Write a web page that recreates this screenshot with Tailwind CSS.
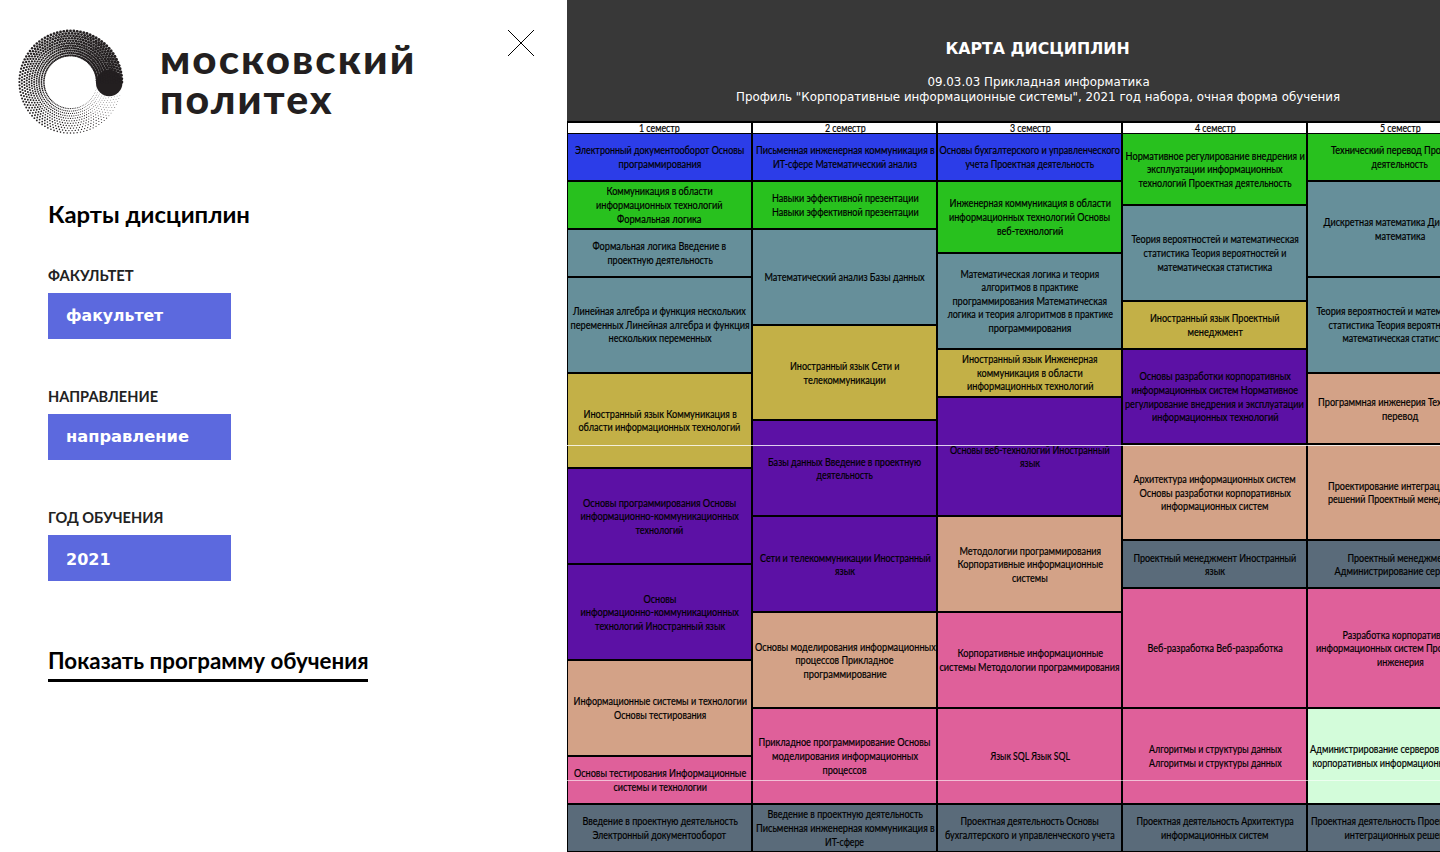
<!DOCTYPE html>
<html lang="ru">
<head>
<meta charset="utf-8">
<title>Карты дисциплин</title>
<script src="https://cdn.jsdelivr.net/npm/@tailwindcss/browser@4"></script>
</head>
<body class="h-[852px] w-[1440px] overflow-hidden bg-white font-['Lato','Open_Sans',sans-serif]">
<div class="flex h-[852px] w-[1440px] overflow-hidden">
  <aside class="h-full w-[567px] shrink-0">
    <header class="flex h-[140px] items-start pl-[16px]">
      <svg id="logo" class="mt-[27px] h-[110px] w-[110px] shrink-0" viewBox="16 27 110 110" fill="#231f20"></svg>
      <div class="ml-[34px] mt-[39px] w-[260px] text-[40px] font-black leading-[40px] tracking-[2px] text-[#231f20]">
        <div class="h-[40px]"><span class="inline-block origin-left whitespace-nowrap" data-w="256">московский</span></div>
        <div class="h-[40px]"><span class="inline-block origin-left whitespace-nowrap" data-w="174">политех</span></div>
      </div>
      <button class="ml-[87px] mt-[29px]" aria-label="Закрыть">
        <svg class="block h-[28px] w-[28px]" viewBox="0 0 28 28" stroke="#000" stroke-width="1"><path d="M1 1 27 27M27 1 1 27"/></svg>
      </button>
    </header>
    <div class="pl-12">
      <h1 class="mt-[59px] h-[30px] text-[23px] font-bold leading-[30px] text-black"><span class="inline-block origin-left whitespace-nowrap" data-w="202">Карты дисциплин</span></h1>
      <div class="mt-[35px] h-[121px]">
        <div class="h-[29px] text-[16px] font-bold leading-[22px] text-[#222]"><span class="inline-block origin-left whitespace-nowrap" data-w="86">ФАКУЛЬТЕТ</span></div>
        <div class="h-[46px] w-[183px] bg-[#5c69de] pl-[18px] font-['DejaVu_Sans'] text-[16px] font-bold leading-[45px] text-white"><span class="inline-block origin-left whitespace-nowrap" data-w="97">факультет</span></div>
      </div>
      <div class="h-[121px]">
        <div class="h-[29px] text-[16px] font-bold leading-[22px] text-[#222]"><span class="inline-block origin-left whitespace-nowrap" data-w="110">НАПРАВЛЕНИЕ</span></div>
        <div class="h-[46px] w-[183px] bg-[#5c69de] pl-[18px] font-['DejaVu_Sans'] text-[16px] font-bold leading-[45px] text-white"><span class="inline-block origin-left whitespace-nowrap" data-w="123">направление</span></div>
      </div>
      <div class="h-[121px]">
        <div class="h-[29px] text-[16px] font-bold leading-[22px] text-[#222]"><span class="inline-block origin-left whitespace-nowrap" data-w="115">ГОД ОБУЧЕНИЯ</span></div>
        <div class="h-[46px] w-[183px] bg-[#5c69de] pl-[18px] font-['DejaVu_Sans'] text-[16px] font-bold leading-[49px] text-white"><span class="inline-block origin-left whitespace-nowrap" data-w="45">2021</span></div>
      </div>
      <a class="mt-[19px] block h-[36px] w-[320px] border-b-[3px] border-black text-[22px] font-bold leading-[29px] text-black"><span class="inline-block origin-left whitespace-nowrap" data-w="321">Показать программу обучения</span></a>
    </div>
  </aside>

  <main class="relative flex h-full w-[873px] shrink-0 flex-col overflow-hidden bg-[#383838]">
    <header class="h-[121px] shrink-0 pl-[70px] pt-[38px] font-['DejaVu_Sans'] text-white">
      <h2 class="h-[22px] w-[802px] text-center text-[16px] font-bold leading-[22px]"><span class="inline-block whitespace-nowrap" data-w="184">КАРТА ДИСЦИПЛИН</span></h2>
      <div class="mt-[15px] w-[803px] text-center text-[12px] leading-[15px]">
        <div><span class="inline-block whitespace-nowrap" data-w="222">09.03.03 Прикладная информатика</span></div>
        <div><span class="inline-block whitespace-nowrap" data-w="604">Профиль "Корпоративные информационные системы", 2021 год набора, очная форма обучения</span></div>
      </div>
    </header>
    <div id="map" class="flex h-[731px] w-[930px] border-l border-t-2 border-black bg-black text-[11px] leading-[13.6px] text-black [-webkit-text-stroke:0.2px_black]"></div>
    <div class="absolute left-0 top-[445px] h-px w-full bg-white/80"></div>
    <div class="absolute left-0 top-[780px] h-px w-full bg-white/60"></div>
  </main>
</div>
<script>
const blue='bg-[#2c3de8]', green='bg-[#28c11e]', teal='bg-[#668f9a]', yellow='bg-[#c3b047]',
      purple='bg-[#5c11a5]', peach='bg-[#d3a287]', pink='bg-[#df609a]', slate='bg-[#5a6b7a]', mint='bg-[#d3fcda]';
// Each cell: colour, span in rows, then pairs of line text and line width
const columns = [
 [[blue,1,'Электронный документооборот Основы',169,'программирования',83],
  [green,1,'Коммуникация в области',106,'информационных технологий',126,'Формальная логика',84],
  [teal,1,'Формальная логика Введение в',134,'проектную деятельность',105],
  [teal,2,'Линейная алгебра и функция нескольких',173,'переменных Линейная алгебра и функция',179,'нескольких переменных',103],
  [yellow,2,'Иностранный язык Коммуникация в',153,'области информационных технологий',162],
  [purple,2,'Основы программирования Основы',153,'информационно-коммуникационных',158,'технологий',48],
  [purple,2,'Основы',33,'информационно-коммуникационных',158,'технологий Иностранный язык',130],
  [peach,2,'Информационные системы и технологии',173,'Основы тестирования',92],
  [pink,1,'Основы тестирования Информационные',172,'системы и технологии',93],
  [slate,1,'Введение в проектную деятельность',155,'Электронный документооборот',134]],
 [[blue,1,'Письменная инженерная коммуникация в',179,'ИТ-сфере Математический анализ',144],
  [green,1,'Навыки эффективной презентации',147,'Навыки эффективной презентации',147],
  [teal,2,'Математический анализ Базы данных',160],
  [yellow,2,'Иностранный язык Сети и',109,'телекоммуникации',82],
  [purple,2,'Базы данных Введение в проектную',153,'деятельность',56],
  [purple,2,'Сети и телекоммуникации Иностранный',171,'язык',20],
  [peach,2,'Основы моделирования информационных',181,'процессов Прикладное',98,'программирование',83],
  [pink,2,'Прикладное программирование Основы',172,'моделирования информационных',146,'процессов',44],
  [slate,1,'Введение в проектную деятельность',155,'Письменная инженерная коммуникация в',179,'ИТ-сфере',39]],
 [[blue,1,'Основы бухгалтерского и управленческого',180,'учета Проектная деятельность',129],
  [green,1.5,'Инженерная коммуникация в области',161,'информационных технологий Основы',161,'веб-технологий',66],
  [teal,2,'Математическая логика и теория',139,'алгоритмов в практике',97,'программирования Математическая',155,'логика и теория алгоритмов в практике',166,'программирования',83],
  [yellow,1,'Иностранный язык Инженерная',135,'коммуникация в области',106,'информационных технологий',126],
  [purple,2.5,'Основы веб-технологий Иностранный',160,'язык',20],
  [peach,2,'Методологии программирования',142,'Корпоративные информационные',146,'системы',36],
  [pink,2,'Корпоративные информационные',146,'системы Методологии программирования',180],
  [pink,2,'Язык SQL Язык SQL',79],
  [slate,1,'Проектная деятельность Основы',138,'бухгалтерского и управленческого учета',170]],
 [[green,1.5,'Нормативное регулирование внедрения и',179,'эксплуатации информационных',136,'технологий Проектная деятельность',153],
  [teal,2,'Теория вероятностей и математическая',167,'статистика Теория вероятностей и',143,'математическая статистика',115],
  [yellow,1,'Иностранный язык Проектный',129,'менеджмент',55],
  [purple,2,'Основы разработки корпоративных',151,'информационных систем Нормативное',167,'регулирование внедрения и эксплуатации',179,'информационных технологий',126],
  [peach,2,'Архитектура информационных систем',162,'Основы разработки корпоративных',151,'информационных систем',107],
  [slate,1,'Проектный менеджмент Иностранный',163,'язык',20],
  [pink,2.5,'Веб-разработка Веб-разработка',135],
  [pink,2,'Алгоритмы и структуры данных',133,'Алгоритмы и структуры данных',133],
  [slate,1,'Проектная деятельность Архитектура',157,'информационных систем',107]],
 [[green,1,'Технический перевод Проектная',138,'деятельность',56],
  [teal,2,'Дискретная математика Дискретная',154,'математика',50],
  [teal,2,'Теория вероятностей и математическая',167,'статистика Теория вероятностей и',143,'математическая статистика',115],
  [peach,1.5,'Программная инженерия Технический',163,'перевод',36],
  [peach,2,'Проектирование интеграционных',143,'решений Проектный менеджмент',144],
  [slate,1,'Проектный менеджмент',104,'Администрирование серверов',130],
  [pink,2.5,'Разработка корпоративных',114,'информационных систем Программная',167,'инженерия',47],
  [mint,2,'Администрирование серверов Разработка',179,'корпоративных информационных систем',174],
  [slate,1,'Проектная деятельность Проектирование',177,'интеграционных решений',110]]
];
const line = (t,w) => `<div class="flex justify-center"><span class="inline-block shrink-0 whitespace-nowrap" data-w="${w}">${t}</span></div>`;
document.getElementById('map').innerHTML = columns.map((cells,i) =>
  `<div class="flex h-[730px] ${i ? 'w-[185px]' : 'w-[185.4px]'} shrink-0 flex-col">
    <div class="h-[11px] shrink-0 overflow-hidden border-b border-r-2 border-black bg-white leading-[10px]">${line((i+1)+' семестр',41)}</div>` +
  cells.map(([c,n,...l]) => {
    let s='';
    for(let k=0;k<l.length;k+=2) s+=line(l[k],l[k+1]);
    return `<div class="flex shrink-0 flex-col justify-center border-b-2 border-r-2 border-black ${c}" style="height:${(n*47.92).toFixed(2)}px">${s}</div>`;
  }).join('') + '</div>').join('');

// Condense or widen each line to its set width
function fit(){
  document.querySelectorAll('[data-w]').forEach(e => {
    e.style.transform = `scaleX(${(e.dataset.w / e.offsetWidth).toFixed(4)})`;
  });
}
fit();
document.fonts.ready.then(fit);

// Halftone ring whose dots grow clockwise into the solid end cap
let dots = '<circle cx="109.2" cy="83" r="13.2"/>';
for(let r=0;r<11;r++){
  const R = 26.6 + r*2.45;
  for(let k=0;k<96;k++){
    const a = (k + (r%2)/2) * 3.75, p = ((a-14+360)%360)/346;
    const size = (0.3 + 1.4*Math.pow(Math.min(p,1),0.8)) * (0.8 + 0.022*r);
    const t = a*Math.PI/180;
    if (p<=1) dots += `<circle cx="${(70.5+R*Math.cos(t)).toFixed(2)}" cy="${(82+R*Math.sin(t)).toFixed(2)}" r="${size.toFixed(2)}"/>`;
  }
}
document.getElementById('logo').innerHTML = dots;
</script>
</body>
</html>
